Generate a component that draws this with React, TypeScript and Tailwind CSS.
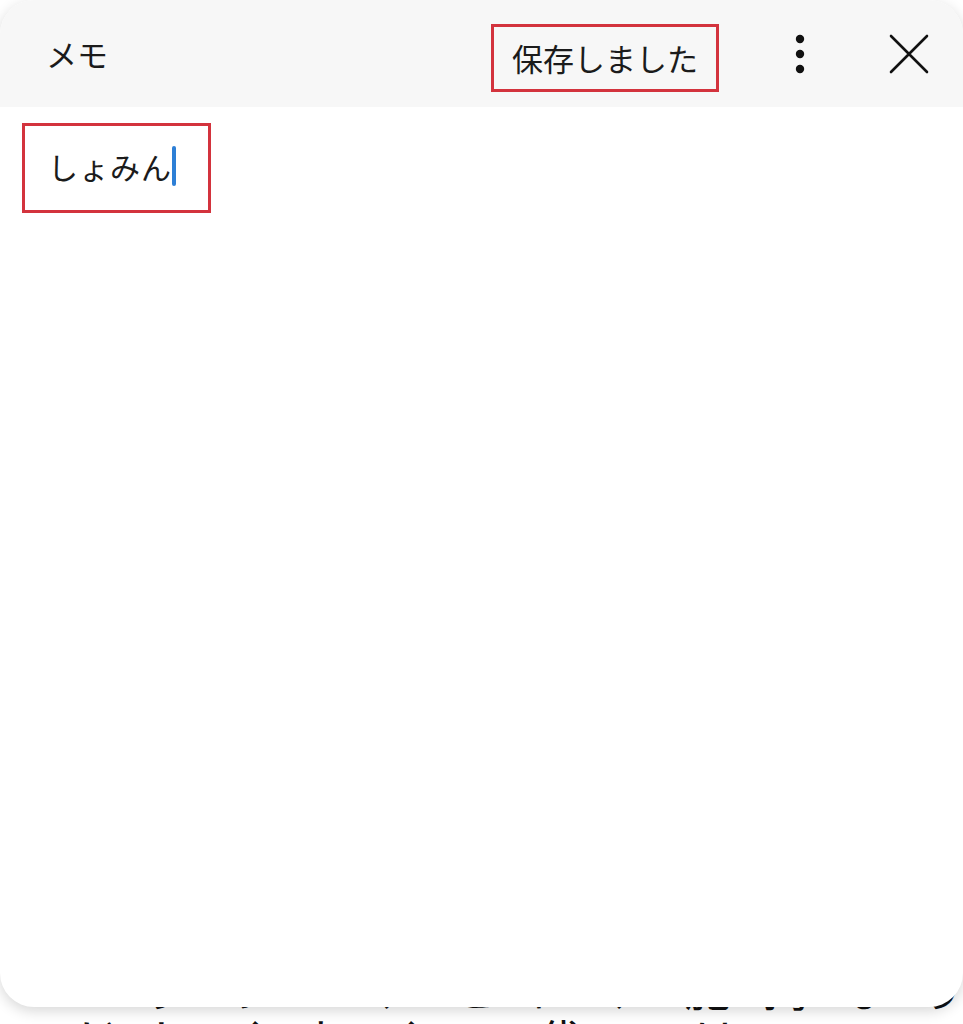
import React from 'react';

const jp = { fontFamily: '"Noto Sans CJK JP", "Noto Sans", sans-serif' };

function MoreIcon() {
  return (
    <svg width="12" height="42" viewBox="0 0 12 42" className="text-[#111]">
      <circle cx="6" cy="6" r="4.2" fill="currentColor" />
      <circle cx="6" cy="21" r="4.2" fill="currentColor" />
      <circle cx="6" cy="36" r="4.2" fill="currentColor" />
    </svg>
  );
}

function CloseIcon() {
  return (
    <svg width="40" height="40" viewBox="0 0 40 40" className="text-[#111]">
      <path d="M2 2 L38 38 M38 2 L2 38" stroke="currentColor" strokeWidth="2.6" strokeLinecap="round" />
    </svg>
  );
}

export default function App() {
  return (
    <div className="relative h-[1024px] w-full overflow-hidden bg-white text-[#1b1b1b]" style={jp}>
      {/* page content behind the memo popup */}
      <div className="flex h-full flex-col justify-end text-[46px] leading-[52px] text-[#111]">
        <p className="whitespace-nowrap pl-[140px] tracking-[32px]">りのゝ、とに、施掲なり</p>
        <p className="-mb-[40px] whitespace-nowrap pl-[70px] tracking-[32px]">だしくおくて代ゞはいて</p>
      </div>

      {/* memo popup */}
      <div className="absolute inset-x-0 top-0 flex h-[1007px] flex-col overflow-hidden rounded-[34px] bg-white shadow-[0_4px_14px_rgba(0,0,0,0.16)]">
        <div className="flex h-[107px] shrink-0 items-center bg-[#f7f7f7] pl-[46px] pr-[34px]">
          <span className="text-[31px] leading-none">メモ</span>
          <div className="ml-auto mt-[8px] flex h-[68px] w-[228px] items-center justify-center border-[3px] border-[#d3333d]">
            <span className="text-[31px] leading-none">保存しました</span>
          </div>
          <div className="ml-[75px] flex w-[12px] items-center">
            <MoreIcon />
          </div>
          <div className="ml-[83px] flex items-center">
            <CloseIcon />
          </div>
        </div>
        <div className="flex-1 px-[22px] pt-[16px]">
          <div className="flex h-[90px] w-[189px] items-start border-[3px] border-[#d3333d] pl-[23px] pt-[20px]">
            <span className="text-[30px] leading-[40px] tracking-[1px]">しょみん</span>
            <span className="h-[40px] w-[4px] rounded-sm bg-[#2d7fd6]" />
          </div>
        </div>
      </div>
    </div>
  );
}
